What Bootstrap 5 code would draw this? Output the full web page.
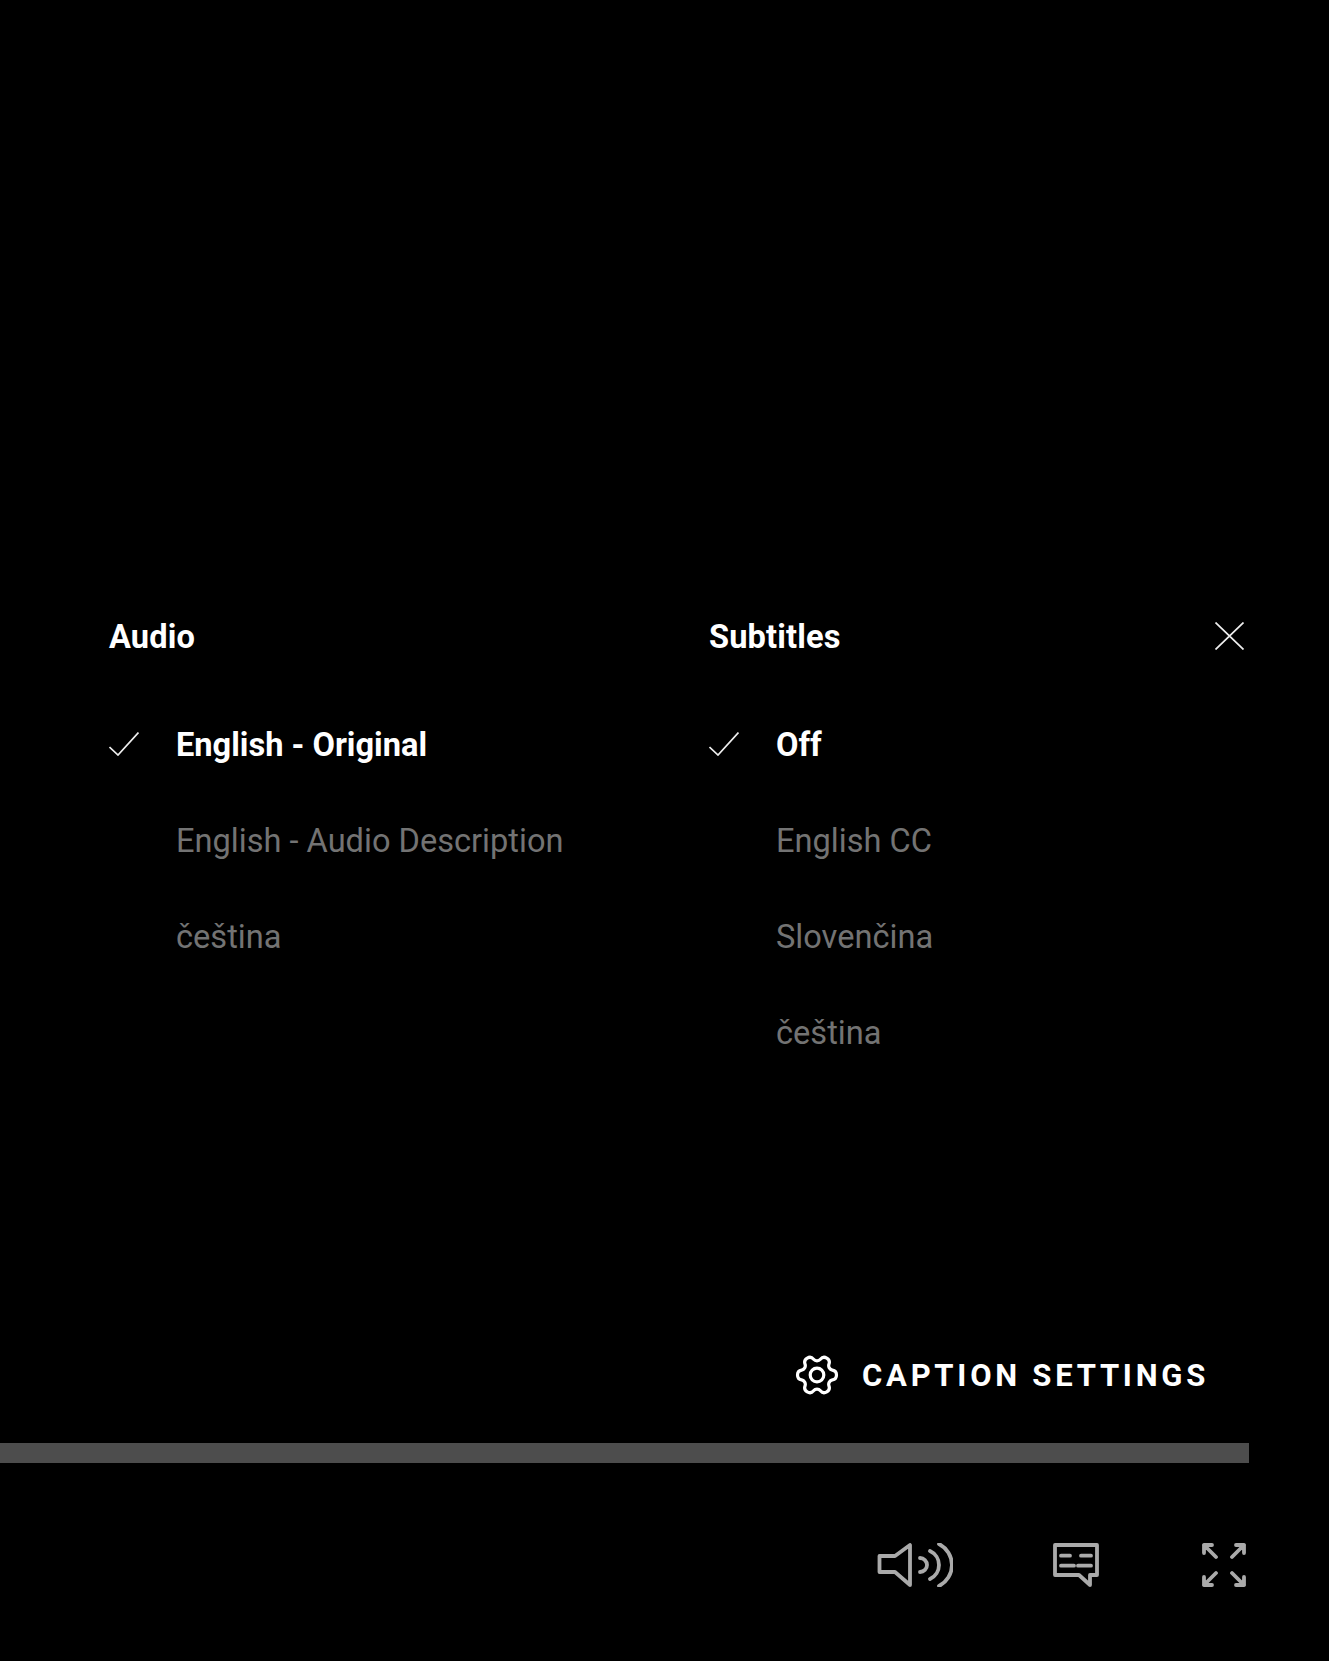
<!DOCTYPE html>
<html lang="en">
<head>
<meta charset="utf-8">
<title>Audio and subtitles</title>
<link href="https://cdn.jsdelivr.net/npm/bootstrap@5.3.0/dist/css/bootstrap.min.css" rel="stylesheet">
<style>
html,body{background:#000;margin:0}
body{font-family:Roboto,"Liberation Sans",sans-serif;color:#fff}
.stage{height:1661px;overflow:hidden}
.menus{padding:612px 0 0 109px}
.menu-col{width:600px}
.menu-col-last{width:535px}
.menu-head{height:48px;line-height:46px;padding-top:2px;font-size:32.6px;font-weight:700;letter-spacing:.15px;margin-bottom:60px}
.menu-item{height:48px;line-height:46px;padding-top:2px;font-size:32.6px;color:#737373}
.menu-item.is-on{color:#fff;font-weight:700}
.tick{width:30px;height:24px;margin:-2px 37px 0 0;flex:none}
.tick path,.closer path{fill:none;stroke:#eee;stroke-width:1.7}
.tick-gap{width:67px;flex:none}
.closer{width:29px;height:28px;margin-top:-3px;background:none;border:0;padding:0;line-height:0}
.caption-row{height:48px;padding-right:120px;gap:23px;margin-bottom:44px}
.caption-label{font-size:31px;font-weight:700;letter-spacing:3.75px;line-height:48px;padding-top:1px}
.gear{width:44px;height:42px}
.gear *{fill:none;stroke:#fff;stroke-width:3.2}
.track{height:20px;width:1249px;background:#4d4d4d}
.controls{height:48px;margin:78px 0 72px;padding-right:83px}
.controls svg *{fill:none;stroke:#aaa;stroke-width:3.8;stroke-linecap:round;stroke-linejoin:round}
.ic-sound{width:76px;height:44px;margin-right:100px}
.ic-cc{width:46px;height:44px;margin-right:103px}
.ic-full{width:44px;height:44px}
</style>
</head>
<body>
<div class="stage d-flex flex-column">
  <div class="menus d-flex">
    <section class="menu-col">
      <div class="menu-head">Audio</div>
      <div class="d-flex flex-column gap-5">
        <div class="menu-item is-on d-flex align-items-center"><svg class="tick" viewBox="0 0 30 24"><path d="M.5 15 9 23 29.5.5"/></svg>English - Original</div>
        <div class="menu-item d-flex align-items-center"><span class="tick-gap"></span>English - Audio Description</div>
        <div class="menu-item d-flex align-items-center"><span class="tick-gap"></span>čeština</div>
      </div>
    </section>
    <section class="menu-col-last">
      <div class="menu-head d-flex justify-content-between align-items-center">
        <span>Subtitles</span>
        <button class="closer" type="button" aria-label="Close"><svg width="29" height="28" viewBox="0 0 29 28"><path d="M.5.5 28.5 27.5M28.5.5.5 27.5"/></svg></button>
      </div>
      <div class="d-flex flex-column gap-5">
        <div class="menu-item is-on d-flex align-items-center"><svg class="tick" viewBox="0 0 30 24"><path d="M.5 15 9 23 29.5.5"/></svg>Off</div>
        <div class="menu-item d-flex align-items-center"><span class="tick-gap"></span>English CC</div>
        <div class="menu-item d-flex align-items-center"><span class="tick-gap"></span>Slovenčina</div>
        <div class="menu-item d-flex align-items-center"><span class="tick-gap"></span>čeština</div>
      </div>
    </section>
  </div>
  <div class="caption-row d-flex justify-content-end align-items-center mt-auto">
    <svg class="gear" viewBox="-22 -21 44 42"><path d="M15.39 -4.92A5 5 0 0 1 15.39 4.92A4.5 4.5 0 0 0 11.96 10.87A5 5 0 0 1 3.43 15.79A4.5 4.5 0 0 0 -3.43 15.79A5 5 0 0 1 -11.96 10.87A4.5 4.5 0 0 0 -15.39 4.92A5 5 0 0 1 -15.39 -4.92A4.5 4.5 0 0 0 -11.96 -10.87A5 5 0 0 1 -3.43 -15.79A4.5 4.5 0 0 0 3.43 -15.79A5 5 0 0 1 11.96 -10.87A4.5 4.5 0 0 0 15.39 -4.92Z"/><circle r="6.8"/></svg>
    <span class="caption-label">CAPTION SETTINGS</span>
  </div>
  <div class="track"></div>
  <div class="controls d-flex justify-content-end align-items-center">
    <svg class="ic-sound" viewBox="0 0 76 44"><path d="M2.5 13H18L33 2V42L18 29H2.5Z"/><path d="M43 15A7 7 0 0 1 43 29M53 8A15.4 15.4 0 0 1 53 36M62 1A23.5 23.5 0 0 1 62 43"/></svg>
    <svg class="ic-cc" viewBox="0 0 46 44"><path d="M2 2H44V32H37V42L26 32H2Z"/><path d="M8 12.7H17M28 12.7H38M8 22.7H21M25 22.7H38"/></svg>
    <svg class="ic-full" viewBox="0 0 44 44"><path d="M2 10V2H10M2 2 14 14M34 2H42V10M42 2 30 14M2 34V42H10M2 42 14 30M34 42H42V34M42 42 30 30"/></svg>
  </div>
</div>
<script src="https://cdn.jsdelivr.net/npm/bootstrap@5.3.0/dist/js/bootstrap.bundle.min.js"></script>
</body>
</html>
